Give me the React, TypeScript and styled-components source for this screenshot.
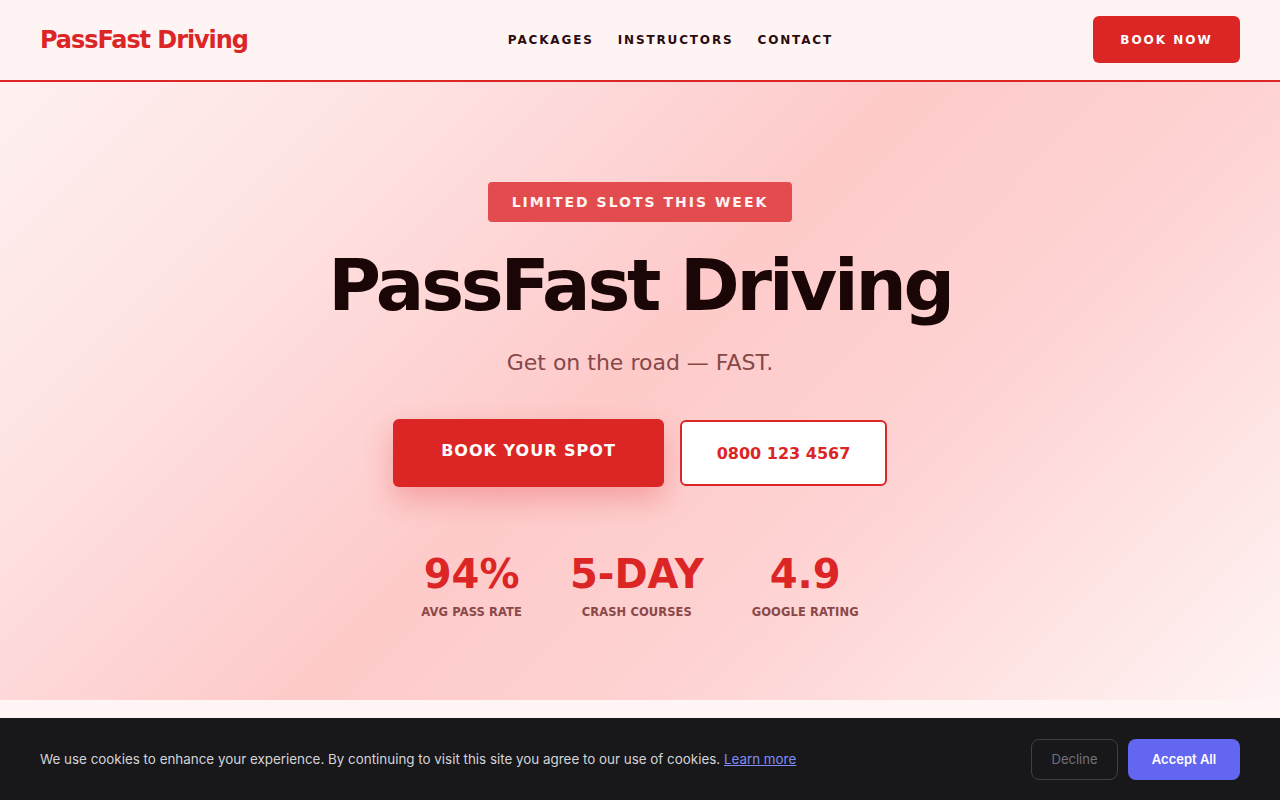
import React from 'react'
import styled, { createGlobalStyle } from 'styled-components'

const GlobalStyle = createGlobalStyle`
  * {
    box-sizing: border-box;
  }
  html, body {
    margin: 0;
    padding: 0;
    background: #fff5f5;
  }
  body {
    font-family: 'DejaVu Sans', 'Liberation Sans', sans-serif;
    color: #1a0606;
    overflow: hidden;
  }
`

const stats = [
  { value: '94%', label: 'AVG PASS RATE' },
  { value: '5-DAY', label: 'CRASH COURSES' },
  { value: '4.9', label: 'GOOGLE RATING' },
]

const App: React.FC = () => {
  return (
    <Page>
      <GlobalStyle />
      <Header>
        <Logo>PassFast Driving</Logo>
        <Nav>
          <NavLink>PACKAGES</NavLink>
          <NavLink>INSTRUCTORS</NavLink>
          <NavLink>CONTACT</NavLink>
        </Nav>
        <HeaderButton>BOOK NOW</HeaderButton>
      </Header>

      <Hero>
        <Badge>LIMITED SLOTS THIS WEEK</Badge>
        <Title>PassFast Driving</Title>
        <Subtitle>Get on the road — FAST.</Subtitle>
        <Actions>
          <PrimaryButton>BOOK YOUR SPOT</PrimaryButton>
          <PhoneButton>0800 123 4567</PhoneButton>
        </Actions>
        <Stats>
          {stats.map(s => (
            <Stat key={s.label}>
              <StatValue>{s.value}</StatValue>
              <StatLabel>{s.label}</StatLabel>
            </Stat>
          ))}
        </Stats>
      </Hero>

      <CookieBar>
        <CookieText>
          We use cookies to enhance your experience. By continuing to visit this site you agree to our use of cookies.{' '}
          <CookieLink href="#">Learn more</CookieLink>
        </CookieText>
        <CookieActions>
          <DeclineButton>Decline</DeclineButton>
          <AcceptButton>Accept All</AcceptButton>
        </CookieActions>
      </CookieBar>
    </Page>
  )
}

export default App

const Page = styled.div`
  min-height: 800px;
  background: #fff5f5;
`

const Header = styled.header`
  height: 82px;
  padding: 0 40px 1px;
  display: flex;
  align-items: center;
  justify-content: space-between;
  background: #fff4f4;
  border-bottom: 2px solid #dc2626;
`

const Logo = styled.div`
  font-size: 24px;
  font-weight: 700;
  color: #dc2626;
  letter-spacing: -0.045em;
`

const Nav = styled.nav`
  display: flex;
  gap: 24px;
`

const NavLink = styled.a`
  font-size: 12px;
  font-weight: 700;
  letter-spacing: 1.85px;
  color: #2a0c10;
  cursor: pointer;
`

const HeaderButton = styled.button`
  width: 147px;
  height: 47px;
  background: #dc2626;
  color: #ffffff;
  border: none;
  border-radius: 6px;
  font-family: inherit;
  font-size: 12px;
  font-weight: 700;
  letter-spacing: 2px;
  cursor: pointer;
`

const Hero = styled.section`
  height: 618px;
  padding-top: 100px;
  display: flex;
  flex-direction: column;
  align-items: center;
  background: linear-gradient(135deg, #fff0f0 0%, #fee2e2 22%, #fecaca 48%, #fed3d3 68%, #fff4f4 100%);
`

const Badge = styled.div`
  height: 40px;
  padding: 0 24px;
  display: flex;
  align-items: center;
  background: #e24c4e;
  color: #fff3f3;
  border-radius: 4px;
  font-size: 14px;
  font-weight: 700;
  letter-spacing: 2px;
`

const Title = styled.h1`
  margin: 24px 0 0;
  font-size: 72px;
  line-height: 1.1;
  font-weight: 700;
  color: #1a0606;
  letter-spacing: -0.045em;
`

const Subtitle = styled.p`
  margin: 21px 0 0;
  font-size: 22px;
  line-height: 1.5;
  color: #864848;
`

const Actions = styled.div`
  margin-top: 40px;
  display: flex;
  gap: 16px;
  align-items: center;
`

const PrimaryButton = styled.button`
  height: 68px;
  width: 271px;
  padding-bottom: 6px;
  background: #dc2626;
  color: #ffffff;
  border: none;
  border-radius: 6px;
  font-family: inherit;
  font-size: 16px;
  font-weight: 700;
  letter-spacing: 1px;
  box-shadow: 0 12px 28px rgba(220, 38, 38, 0.28);
  cursor: pointer;
`

const PhoneButton = styled.button`
  height: 66px;
  width: 207px;
  background: #ffffff;
  color: #dc2626;
  border: 2px solid #dc2626;
  border-radius: 6px;
  font-family: inherit;
  font-size: 16px;
  font-weight: 700;
  cursor: pointer;
`

const Stats = styled.div`
  margin-top: 63px;
  display: flex;
  gap: 48px;
`

const Stat = styled.div`
  display: flex;
  flex-direction: column;
  align-items: center;
`

const StatValue = styled.div`
  font-size: 40px;
  line-height: 48px;
  font-weight: 700;
  color: #dc2626;
`

const StatLabel = styled.div`
  margin-top: 7px;
  font-size: 11.5px;
  font-weight: 700;
  letter-spacing: 0.1px;
  color: #8b4848;
`

const CookieBar = styled.div`
  position: fixed;
  left: 0;
  right: 0;
  bottom: 0;
  height: 82px;
  padding: 0 40px;
  display: flex;
  align-items: center;
  justify-content: space-between;
  background: #18181b;
  font-family: Inter, 'Liberation Sans', sans-serif;
`

const CookieText = styled.p`
  margin: 0;
  font-size: 13.4px;
  color: #d4d4d8;
`

const CookieLink = styled.a`
  color: #818cf8;
  text-decoration: underline;
`

const CookieActions = styled.div`
  display: flex;
  gap: 10px;
`

const DeclineButton = styled.button`
  height: 41px;
  width: 87px;
  background: transparent;
  color: #71717a;
  border: 1px solid #3f3f46;
  border-radius: 8px;
  font-family: inherit;
  font-size: 13px;
  cursor: pointer;
`

const AcceptButton = styled.button`
  height: 41px;
  width: 112px;
  background: #6366f1;
  color: #ffffff;
  border: none;
  border-radius: 8px;
  font-family: inherit;
  font-size: 13px;
  font-weight: 600;
  cursor: pointer;
`
